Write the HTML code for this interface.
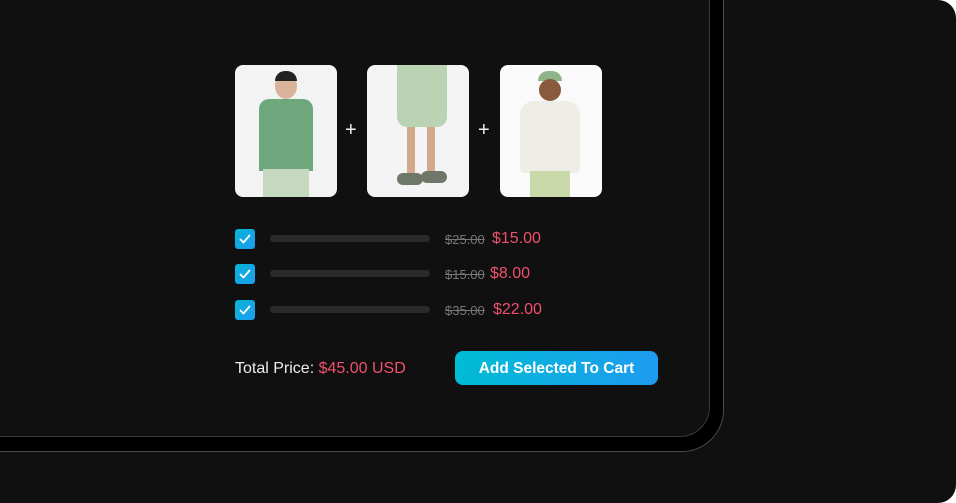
<!DOCTYPE html>
<html><head><style>
html,body{margin:0;padding:0;background:#fff;}
.page{position:relative;width:956px;height:503px;background:#101010;border-radius:0 18px 18px 0;overflow:hidden;font-family:"Liberation Sans",sans-serif;}
.frame{position:absolute;left:-60px;top:-60px;width:784px;height:512px;border:1px solid #4a4a4a;border-radius:0 0 42px 0;background:#000;box-sizing:border-box;}
.inner{position:absolute;left:-60px;top:-60px;width:770px;height:497px;border:1px solid #3a3a3a;border-radius:0 0 30px 0;background:#101010;box-sizing:border-box;}
.img{position:absolute;top:65px;width:102px;height:132px;border-radius:8px;background:#f2f2f2;overflow:hidden;}
.plus{position:absolute;top:119px;color:#eee;font-size:20px;}
.cb{position:absolute;left:235px;width:20px;height:20px;border-radius:3px;background:linear-gradient(135deg,#06b6d4,#1e9bf0);}
.bar{position:absolute;left:270px;width:160px;height:7px;border-radius:4px;background:#2a2a2a;}
.old{position:absolute;left:445px;color:#777;font-size:13px;text-decoration:line-through;}
.new{position:absolute;color:#f0506e;font-size:16px;}
</style></head><body>
<div class="page">
<div class="frame"></div>
<div class="inner"></div>
<div class="img" style="left:235px;background:#f3f3f3">
<div style="position:absolute;left:40px;top:8px;width:22px;height:26px;border-radius:50%;background:#d9b49a"></div>
<div style="position:absolute;left:40px;top:6px;width:22px;height:10px;border-radius:10px 10px 0 0;background:#222"></div>
<div style="position:absolute;left:24px;top:34px;width:54px;height:72px;border-radius:10px 10px 0 0;background:#6da77b"></div>
<div style="position:absolute;left:28px;top:104px;width:46px;height:30px;background:#c5d9c0"></div>
</div>
<div class="plus" style="left:345px">+</div>
<div class="img" style="left:367px;background:#f4f4f4">
<div style="position:absolute;left:30px;top:0;width:50px;height:62px;border-radius:0 0 10px 10px;background:#b9d3b3"></div>
<div style="position:absolute;left:40px;top:62px;width:8px;height:48px;background:#d2a98c"></div>
<div style="position:absolute;left:60px;top:62px;width:8px;height:48px;background:#d2a98c"></div>
<div style="position:absolute;left:30px;top:108px;width:26px;height:12px;border-radius:6px;background:#6f7768"></div>
<div style="position:absolute;left:54px;top:106px;width:26px;height:12px;border-radius:6px;background:#6f7768"></div>
</div>
<div class="plus" style="left:478px">+</div>
<div class="img" style="left:500px;background:#fafafa">
<div style="position:absolute;left:38px;top:6px;width:24px;height:10px;border-radius:10px 10px 0 0;background:#8fb487"></div>
<div style="position:absolute;left:39px;top:14px;width:22px;height:22px;border-radius:50%;background:#8a5a3c"></div>
<div style="position:absolute;left:20px;top:36px;width:60px;height:72px;border-radius:14px 14px 4px 4px;background:#eeeee6"></div>
<div style="position:absolute;left:30px;top:106px;width:40px;height:30px;background:#c9d8a8"></div>
</div>

<div class="cb" style="top:229px"></div>
<div class="cb" style="top:264px"></div>
<div class="cb" style="top:300px"></div>
<svg style="position:absolute;left:235px;top:229px" width="20" height="92"><g fill="none" stroke="#fff" stroke-width="1.8" stroke-linecap="round" stroke-linejoin="round"><path d="M5.5 10.5l3 3 6-7"/><path d="M5.5 45.5l3 3 6-7"/><path d="M5.5 81.5l3 3 6-7"/></g></svg>
<div class="bar" style="top:235px"></div>
<div class="bar" style="top:270px"></div>
<div class="bar" style="top:306px"></div>
<div class="old" style="top:232px">$25.00</div><div class="new" style="left:492px;top:230px">$15.00</div>
<div class="old" style="top:267px">$15.00</div><div class="new" style="left:490px;top:265px">$8.00</div>
<div class="old" style="top:303px">$35.00</div><div class="new" style="left:493px;top:301px">$22.00</div>

<div style="position:absolute;left:235px;top:360px;font-size:16px;color:#eee">Total Price: <span style="color:#f0506e">$45.00 USD</span></div>
<div style="position:absolute;left:455px;top:351px;width:203px;height:34px;border-radius:8px;background:linear-gradient(90deg,#00bcd4,#1e9bf0);color:#fff;font-size:15.5px;font-weight:bold;line-height:35px;text-align:center">Add Selected To Cart</div>
</div>
</body></html>
